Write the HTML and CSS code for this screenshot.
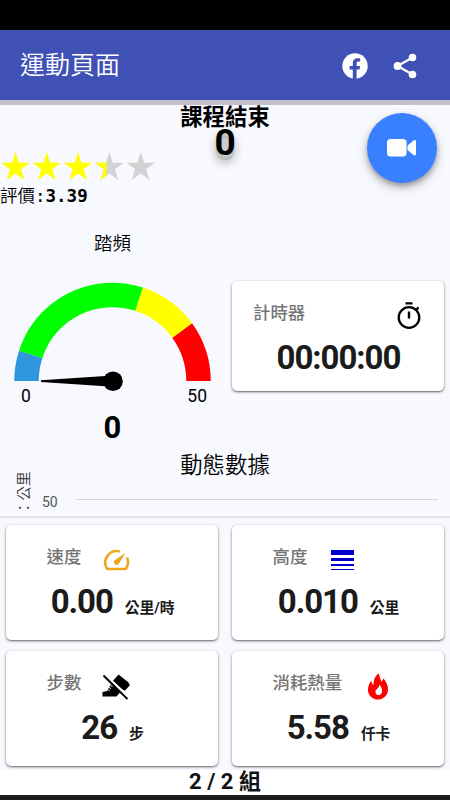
FILE: index.html
```
<!DOCTYPE html>
<html lang="zh-Hant">
<head>
<meta charset="utf-8">
<title>運動頁面</title>
<link rel="stylesheet" href="styles.css">
</head>
<body>
<div class="screen">
  <div class="status"></div>
  <header class="appbar">
    <h1>運動頁面</h1>
    <svg class="fb" viewBox="0 0 26 26"><circle cx="13" cy="13" r="12.700" fill="#fff"/><path d="M10.800 26v-9.500H7.600V13h3.200v-2.700C10.800 6.800 12.800 5.200 15.800 5.200c1.200 0 2.400.2 2.400.2v3h-1.700c-1.400 0-1.900.8-1.900 1.800V13h3.500l-.6 3.500h-2.900V26z" fill="#3f51b5"/></svg>
    <svg class="share" viewBox="0 0 24 26"><path d="M19.500 4.500 4.500 13l15 8.500" fill="none" stroke="#fff" stroke-width="2.200"/><g fill="#fff"><circle cx="19.500" cy="4.500" r="3.800"/><circle cx="4.500" cy="13" r="3.900"/><circle cx="19.500" cy="21.500" r="3.800"/></g></svg>
  </header>
  <main>
    <section class="top">
      <div class="rating">
        <svg class="stars" viewBox="0 0 157 30">
          <defs>
            <path id="star" d="M15.500 0 18.900 10.700H29.800L21 17.300 24.400 28 15.500 21.400 6.600 28 10 17.300 1.200 10.700H12.100z"/>
            <clipPath id="part"><path d="M0 0h12.600v30H0z"/></clipPath>
          </defs>
          <g fill="#ff0"><use href="#star"/><use href="#star" x="31.300"/><use href="#star" x="62.600"/></g>
          <g fill="#d3d3d3"><use href="#star" x="93.900"/><use href="#star" x="125.200"/></g>
          <g transform="translate(93.900)"><use href="#star" fill="#ff0" clip-path="url(#part)"/></g>
        </svg>
        <p class="score">評價:<b>3.39</b></p>
      </div>
      <div class="course"><h2>課程結束</h2><p>0</p></div>
      <div class="fab"><svg viewBox="0 0 30 18"><rect width="19.500" height="17.500" rx="3.500"/><path d="M20.500 6.500 26.600 1.600Q29 .2 29 2.800V14.700Q29 17.300 26.600 15.900L20.500 11z"/></svg></div>
    </section>
    <section class="mid">
      <div class="cadence">
        <h3>踏頻</h3>
        <svg class="gauge" viewBox="0 0 198 110">
          <g fill="none" stroke-width="24.500">
            <path d="M12.500 99A86 86 0 0 1 184.500 99" pathLength="50" stroke="red" stroke-dasharray="0 40 10 60"/>
            <path d="M12.500 99A86 86 0 0 1 184.500 99" pathLength="50" stroke="#ff0" stroke-dasharray="0 30 10 60"/>
            <path d="M12.500 99A86 86 0 0 1 184.500 99" pathLength="50" stroke="#0f0" stroke-dasharray="0 5 25 60"/>
            <path d="M12.500 99A86 86 0 0 1 184.500 99" pathLength="50" stroke="#2f95dc" stroke-dasharray="5 60"/>
          </g>
          <path d="M27 98.200 99 93.600V104.800L27 100z"/><circle cx="99" cy="99.200" r="9.800"/>
        </svg>
        <div class="range"><span>0</span><span>50</span></div>
        <p class="rpm">0</p>
      </div>
      <div class="card timer">
        <div class="head"><span>計時器</span>
          <svg viewBox="0 0 24 27"><g fill="none" stroke="#000"><circle cx="12" cy="15.500" r="10.300" stroke-width="2.300"/><path d="M12 9.500v7M8.500 1.400h7" stroke-width="2.400"/><path d="m18.800 8.200 2.800-2.800" stroke-width="2.200"/></g></svg>
        </div>
        <p class="value">00:00:00</p>
      </div>
    </section>
    <section class="chart">
      <h3>動態數據</h3>
      <div class="plot"><span class="unit">：公里</span><span class="tick">50</span><i class="line"></i></div>
    </section>
    <section class="grid">
      <div class="card">
        <div class="head"><span>速度</span>
          <svg viewBox="0 0 27 27"><path d="M16.800 4.500A11.500 11.500 0 0 0 3.900 21.500Q4.200 22 5 22H22Q22.800 22 23.100 21.500A11.500 11.500 0 0 0 24 10.500" fill="none" stroke="#f0a51c" stroke-width="2.600" stroke-linejoin="round"/><path d="M22.500 6 15.800 16.700A2.700 2.700 0 1 1 12 12.900z" fill="#f0a51c"/></svg></div>
        <p class="value">0.00<small>公里/時</small></p>
      </div>
      <div class="card">
        <div class="head"><span>高度</span>
          <svg viewBox="0 0 27 27"><path d="M2 3h23v5H2zM2 11h23v3H2zM2 17h23v2H2zM2 22h23v1H2z" fill="#00c"/></svg></div>
        <p class="value">0.010<small>公里</small></p>
      </div>
      <div class="card">
        <div class="head"><span>步數</span>
          <svg viewBox="0 0 27 27"><path d="m15.600 1.400 10.600 8.600-5.800 7.200L9.700 8zM20.500 16.500l5.300-5.700 1.300 1.200-5.300 5.700z"/><path d="M-.5 23.500V19L4 18 7.500 12l2.500-2 11 9-4 .5-3.500 4z"/><path d="m1.900 1.500 24.500 24" stroke="#fff" stroke-width="2.500"/><path d="m.5 2.500 24 23.600" stroke="#000" stroke-width="2"/><path d="m4.500 16.500 2 1m-.5-3 2 1m-.5-3 2 1" stroke="#fff"/></svg></div>
        <p class="value">26<small>步</small></p>
      </div>
      <div class="card">
        <div class="head"><span>消耗熱量</span>
          <svg viewBox="0 0 27 27"><path d="M15 .3C15.300 4 16.500 6 17.500 8.700L19.500 5.500C22.500 9 24.400 13 24 17.500 23.300 22.800 19 26.600 14 26.600S4.300 22.800 4 17.500C3.800 13.500 5 10.500 7.500 7.500 7.300 9.500 8 11 9.500 12 9.500 7 11 3 15 .3zM15.300 11.800C15.300 16 11 16 11.500 19.200 11.800 22 14.500 22.700 16.500 21.500 19.300 19.500 18.200 14.500 15.300 11.800z" fill="red" fill-rule="evenodd"/></svg></div>
        <p class="value">5.58<small>仟卡</small></p>
      </div>
    </section>
  </main>
  <footer>2 / 2 組</footer>
  <div class="nav"></div>
</div>
</body>
</html>
```
FILE: styles.css
```
* { box-sizing: border-box; margin: 0; padding: 0; }
body { width: 450px; height: 800px; overflow: hidden; background: #f8f9ff; color: #000; font-family: Roboto, "Noto Sans CJK TC", sans-serif; }
.screen { display: flex; flex-direction: column; height: 800px; }
svg { display: block; overflow: visible; }
.status { height: 30px; background: #000; }
.appbar { display: flex; align-items: center; height: 70px; padding: 0 33px 0 20px; background: #3f51b5; color: #fff; }
.appbar h1 { flex: 1; font-size: 25px; font-weight: 350; line-height: 36px; padding-top: 1px; }
.fb { width: 26px; height: 26px; margin: 2px 25px 0 0; }
.share { width: 24px; height: 26px; margin-top: 2px; }
main { display: flex; flex-direction: column; height: 670px; }
.top { display: grid; grid-template-columns: 157px 136px 1fr; height: 120px; border-top: 5px solid #c2c3c9; }
.rating { padding-top: 47px; }
.stars { width: 157px; height: 30px; }
.score { font: 350 17.500px/28px "DejaVu Sans Mono", "Noto Sans CJK TC", monospace; white-space: nowrap; }
.score b { font-weight: 700; }
.course { text-align: center; }
.course h2 { font-size: 22.400px; line-height: 24px; font-weight: 700; white-space: nowrap; }
.course p { font-size: 37px; font-weight: 700; line-height: 28px; text-shadow: 0 1px #ccc, 0 3px #c4c4c4, 0 5px #bbb, 0 7px 10px #999; }
.fab { justify-self: end; display: grid; place-items: center; width: 70px; height: 70px; margin: 7.500px 13px 0 0; border-radius: 50%; background: #3880ff; box-shadow: 0 3px 5px #0004, 0 5px 12px #0003; }
.fab svg { width: 30px; height: 18px; fill: #fff; }
.mid { display: grid; grid-template-columns: 225px 212px; column-gap: 7px; height: 226px; }
.cadence { display: flex; flex-direction: column; align-items: center; }
.cadence h3 { margin-top: 11px; font-size: 18.500px; font-weight: 350; line-height: 26px; }
.gauge { width: 198px; height: 110px; margin-top: 25px; }
.range { display: flex; justify-content: space-between; width: 186px; margin: -8px 0 0 3px; font-size: 17.500px; line-height: 25px; }
.rpm { margin-top: 1px; font-size: 31px; font-weight: 700; line-height: 36px; }
.card { background: #fff; border-radius: 5px; box-shadow: 0 1px 2px #0008, 0 1px 4px #0002; color: #1b1b1b; }
.head { display: flex; align-items: flex-start; height: 56px; padding: 18px 0 0 40.500px; color: #757575; font-size: 17.400px; line-height: 28px; font-weight: 500; }
.head svg { width: 27px; height: 27px; margin: 4px 0 0 22px; }
.value { display: flex; justify-content: center; align-items: baseline; padding-left: 1px; font-size: 33px; font-weight: 700; line-height: 42px; letter-spacing: -1.050px; }
.value small { margin-left: 12px; font-size: 14.800px; font-weight: 700; letter-spacing: -.1px; }
.timer { height: 110px; margin-top: 61px; }
.timer .head { justify-content: space-between; padding: 18px 23px 0 21px; }
.timer .head svg { width: 24px; margin: 3px 0 0; }
.chart { height: 72px; border-bottom: 2px solid #e2e3e9; }
.chart h3 { height: 28px; font-size: 22.400px; line-height: 38px; font-weight: 350; text-align: center; }
.plot { display: flex; height: 42px; color: #555; }
.unit { flex: none; width: 17px; height: 42px; margin: 0 0 0 16px; padding-top: 1px; font-size: 14.500px; line-height: 17px; font-weight: 350; writing-mode: vertical-rl; text-orientation: sideways; white-space: nowrap; transform: rotate(180deg); color: #333; }
.tick { width: 34px; margin: 18px 0 0 9px; font-size: 14px; line-height: 20px; }
.line { width: 362px; height: 1px; margin-top: 25px; background: #d7d8de; }
.grid { display: grid; grid-template: 115px 115px / 212px 212px; gap: 11px 14px; padding: 7px 6px 4px; }
footer { height: 25px; background: #fff; text-align: center; font-size: 22px; font-weight: 700; line-height: 24px; color: #111; }
.nav { height: 5px; background: #1d1b20; }
```
